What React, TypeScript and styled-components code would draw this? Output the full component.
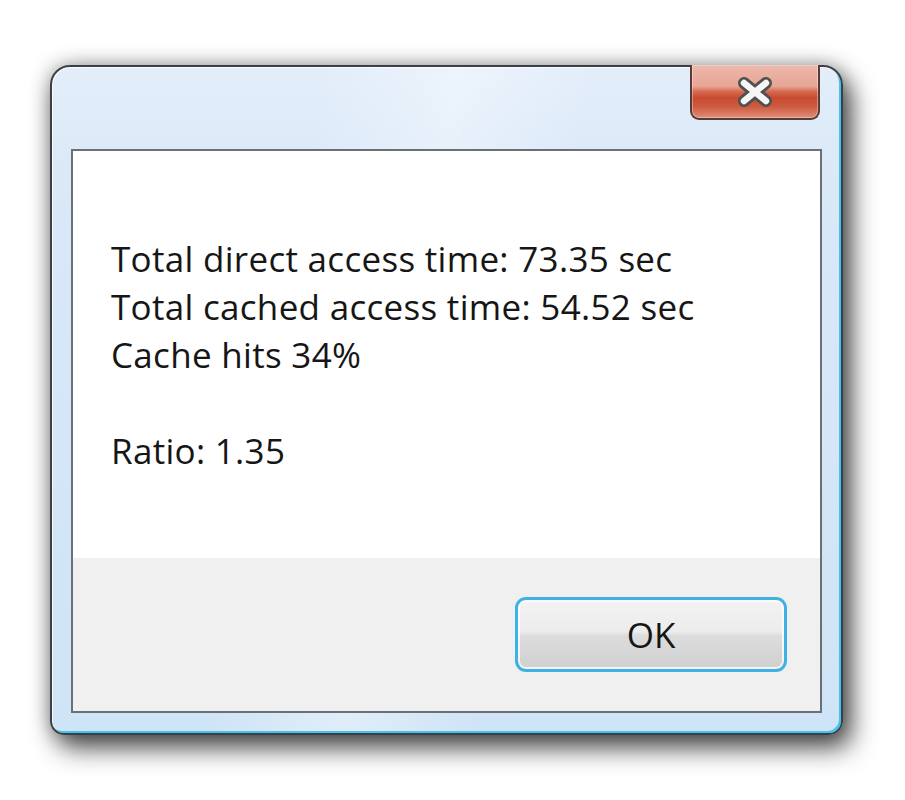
import styled, { createGlobalStyle } from 'styled-components';

const GlobalStyle = createGlobalStyle`
  html, body {
    margin: 0;
    padding: 0;
    background: #ffffff;
  }
`

const lines = [
  'Total direct access time: 73.35 sec',
  'Total cached access time: 54.52 sec',
  'Cache hits 34%',
  '',
  'Ratio: 1.35',
]

function CloseGlyph() {
  return (
    <svg width="40" height="34" viewBox="0 0 40 34">
      <g strokeLinecap="round" fill="none">
        <path d="M9 8 L31 26 M31 8 L9 26" stroke="#505050" strokeWidth="12" />
        <path d="M9 8 L31 26 M31 8 L9 26" stroke="#f6f6f6" strokeWidth="6.5" />
      </g>
    </svg>
  )
}

function App() {
  return (
    <>
      <GlobalStyle />
      <Stage>
        <Window>
          <TitleBar>
            <CloseButton aria-label="Close">
              <CloseGlyph />
            </CloseButton>
          </TitleBar>
          <Client>
            <MessageArea>
              {lines.map((line, i) => (
                <MessageLine key={i}>{line || '\u00a0'}</MessageLine>
              ))}
            </MessageArea>
            <Footer>
              <OkButton>OK</OkButton>
            </Footer>
          </Client>
        </Window>
      </Stage>
    </>
  )
}

const Stage = styled.div`
  width: 905px;
  height: 800px;
  box-sizing: border-box;
  padding: 65px 0 0 50px;
  overflow: hidden;
  font-family: "Open Sans", "Noto Sans", sans-serif;
`

const Window = styled.div`
  width: 793px;
  height: 670px;
  box-sizing: border-box;
  padding: 0 19px 20px 19px;
  display: flex;
  flex-direction: column;
  border: 2px solid #3b4046;
  border-radius: 20px 20px 14px 14px;
  background:
    linear-gradient(100deg, rgba(255,255,255,0) 30%, rgba(255,255,255,0.35) 45%, rgba(255,255,255,0) 60%),
    linear-gradient(180deg, #e3eefa 0%, #dbe9f8 14%, #d6e7f8 40%, #cfe4f6 100%);
  box-shadow:
    inset 1px 1px 0 rgba(255,255,255,0.8),
    inset -2px -2px 0 #45c3ee,
    8px 13px 26px rgba(0,0,0,0.68),
    0 0 20px rgba(0,0,0,0.34);
`

const TitleBar = styled.div`
  height: 82px;
  display: flex;
  justify-content: flex-end;
  align-items: flex-start;
`

const CloseButton = styled.button`
  width: 130px;
  height: 55px;
  margin: -2px 2px 0 0;
  padding: 0;
  display: flex;
  align-items: center;
  justify-content: center;
  border: 2px solid #5a3a34;
  border-top: none;
  border-radius: 0 0 9px 9px;
  background: linear-gradient(180deg,
    #ecb8ab 0%, #e7a695 40%, #d66a50 50%, #c94a2e 62%, #cd5a3f 78%, #df8e78 100%);
  box-shadow: inset 0 0 0 1px rgba(255,255,255,0.35);
`

const Client = styled.div`
  flex: 1;
  display: flex;
  flex-direction: column;
  border: 2px solid #6b7076;
  background: #ffffff;
`

const MessageArea = styled.div`
  flex: 1;
  box-sizing: border-box;
  padding: 84px 0 0 38px;
  background: #ffffff;
`

const MessageLine = styled.div`
  font-size: 35px;
  line-height: 48px;
  letter-spacing: 0.3px;
  color: #161616;
  white-space: pre;
`

const Footer = styled.div`
  height: 153px;
  box-sizing: border-box;
  display: flex;
  align-items: center;
  justify-content: flex-end;
  padding-right: 33px;
  background: #f0f0f0;
`

const OkButton = styled.button`
  width: 272px;
  height: 75px;
  padding: 0;
  font-family: "Open Sans", "Noto Sans", sans-serif;
  font-size: 35px;
  color: #161616;
  border: 3px solid #3fb2e4;
  border-radius: 11px;
  background: linear-gradient(180deg, #f3f3f3 0%, #ececec 46%, #dcdcdc 52%, #d0d0d0 100%);
  box-shadow: inset 0 0 0 2px rgba(255,255,255,0.75);
`

export default App;
